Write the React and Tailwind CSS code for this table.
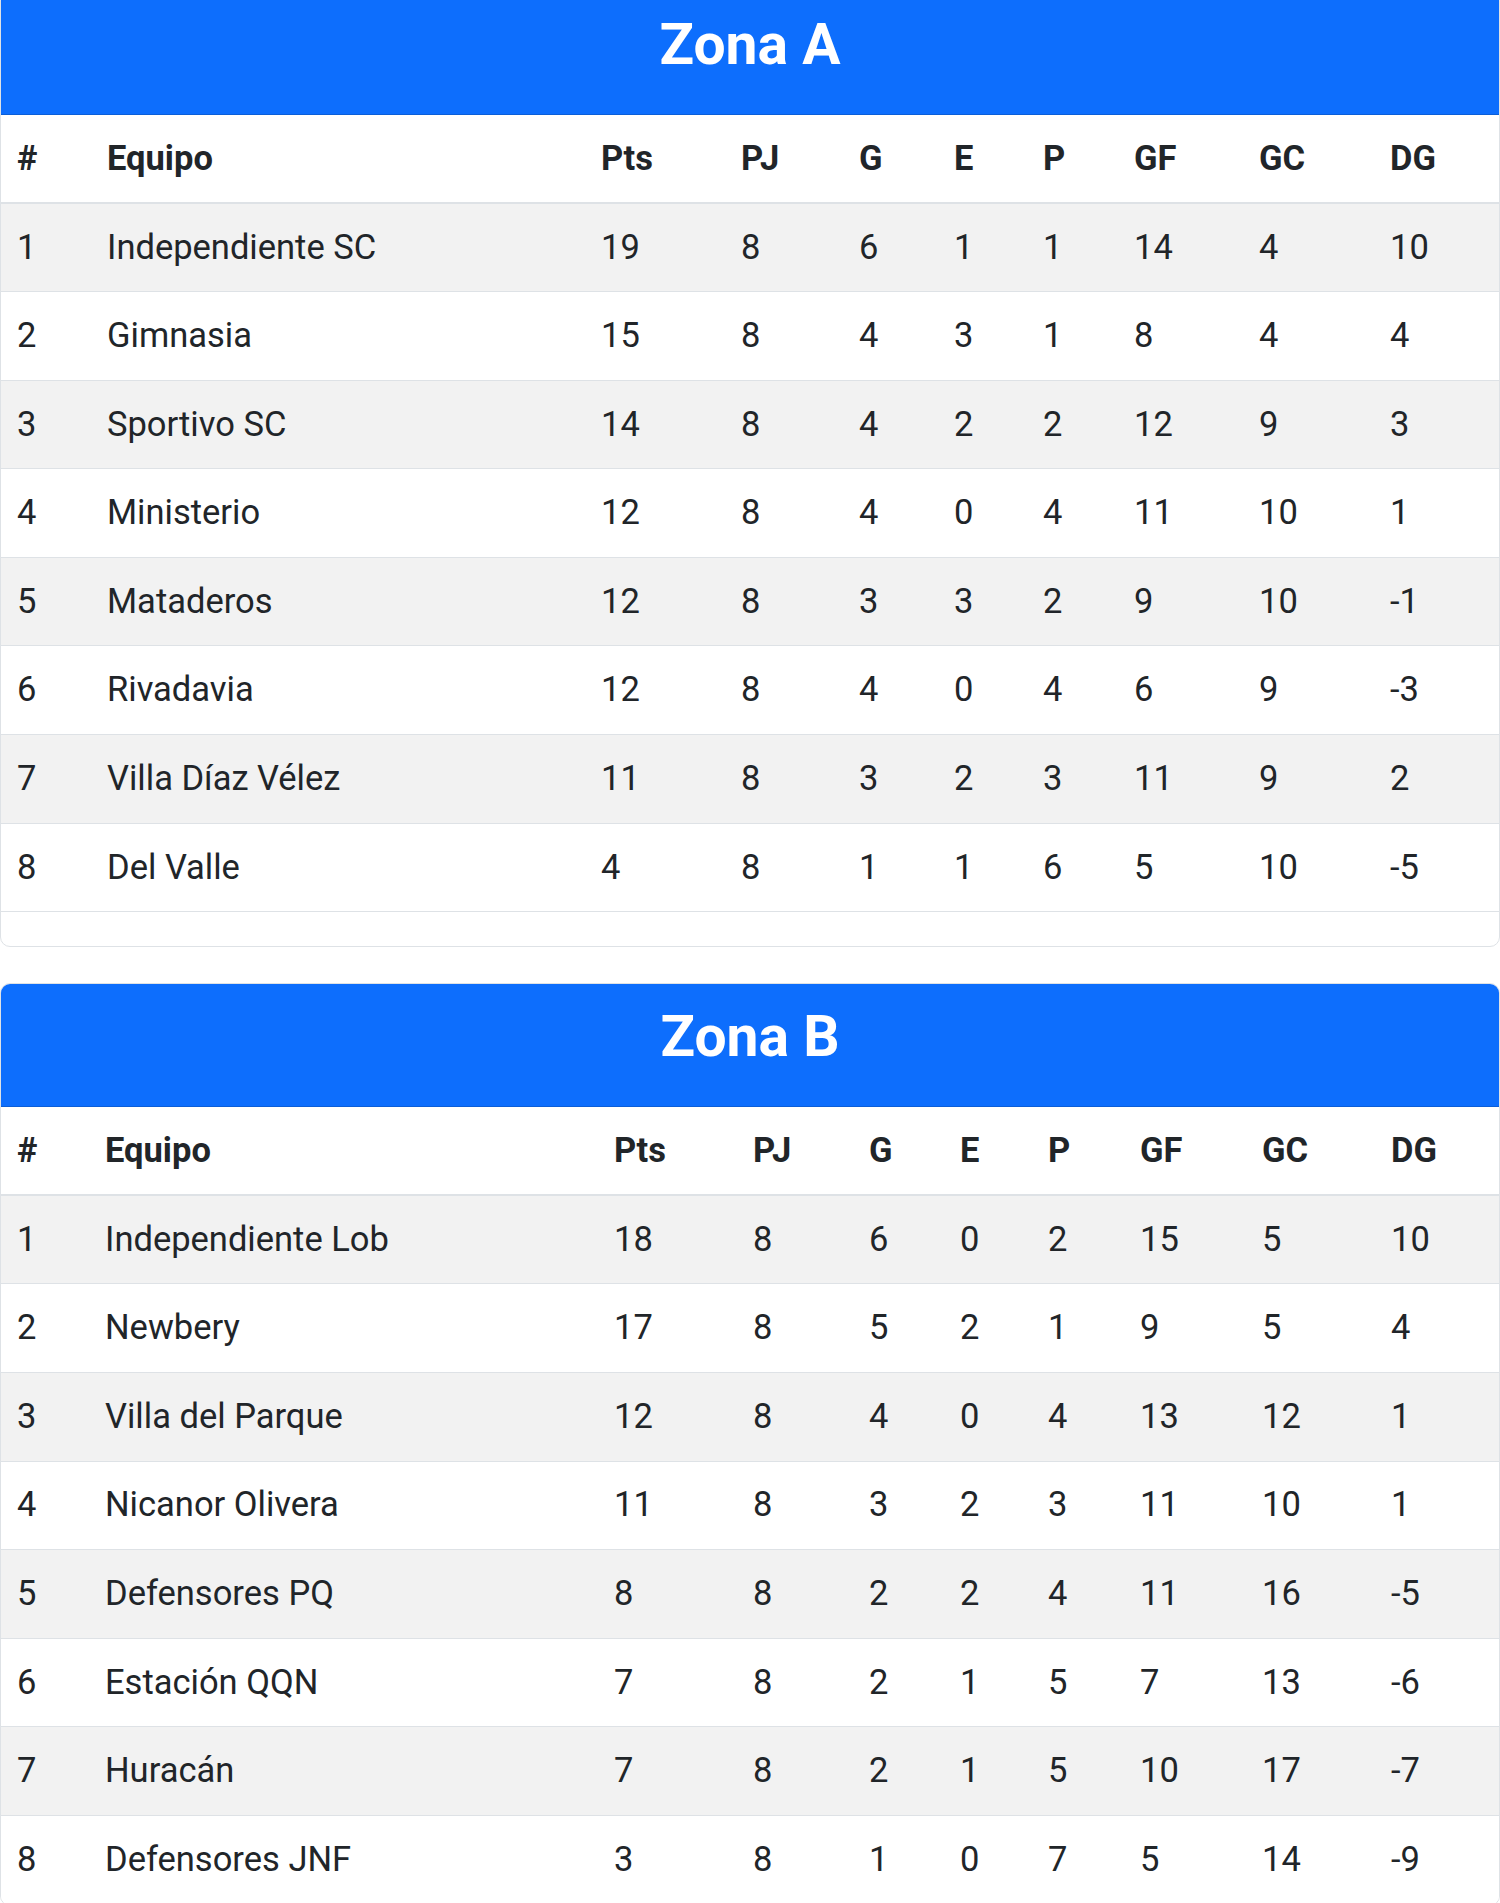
import React from "react";

const columns = ["#", "Equipo", "Pts", "PJ", "G", "E", "P", "GF", "GC", "DG"];

const zonaA = [
  [1, "Independiente SC", 19, 8, 6, 1, 1, 14, 4, 10],
  [2, "Gimnasia", 15, 8, 4, 3, 1, 8, 4, 4],
  [3, "Sportivo SC", 14, 8, 4, 2, 2, 12, 9, 3],
  [4, "Ministerio", 12, 8, 4, 0, 4, 11, 10, 1],
  [5, "Mataderos", 12, 8, 3, 3, 2, 9, 10, -1],
  [6, "Rivadavia", 12, 8, 4, 0, 4, 6, 9, -3],
  [7, "Villa Díaz Vélez", 11, 8, 3, 2, 3, 11, 9, 2],
  [8, "Del Valle", 4, 8, 1, 1, 6, 5, 10, -5],
];

const zonaB = [
  [1, "Independiente Lob", 18, 8, 6, 0, 2, 15, 5, 10],
  [2, "Newbery", 17, 8, 5, 2, 1, 9, 5, 4],
  [3, "Villa del Parque", 12, 8, 4, 0, 4, 13, 12, 1],
  [4, "Nicanor Olivera", 11, 8, 3, 2, 3, 11, 10, 1],
  [5, "Defensores PQ", 8, 8, 2, 2, 4, 11, 16, -5],
  [6, "Estación QQN", 7, 8, 2, 1, 5, 7, 13, -6],
  [7, "Huracán", 7, 8, 2, 1, 5, 10, 17, -7],
  [8, "Defensores JNF", 3, 8, 1, 0, 7, 5, 14, -9],
];

// column widths differ a little between the two tables (auto layout in the original)
const widthsA = [90, 494, 140, 118, 95, 89, 91, 125, 131, 127];
const widthsB = [88, 509, 139, 116, 91, 88, 92, 122, 129, 126];

function ZoneCard({ title, rows, widths, className = "" }) {
  return (
    <section className={`overflow-hidden rounded-[10px] border border-[#dee2e6] bg-white ${className}`}>
      <h2 className="border-b border-[#0b5ed7] bg-[#0d6efd] pt-[19px] pb-[35px] text-center text-[57px] leading-[68px] font-bold text-white">
        {title}
      </h2>
      <table className="w-full table-fixed border-collapse text-left">
        <colgroup>
          {widths.map((w, i) => (
            <col key={i} style={{ width: w }} />
          ))}
        </colgroup>
        <thead>
          <tr className="border-b-2 border-[#dee2e6]">
            {columns.map((c) => (
              <th key={c} className="h-[88px] pl-[16px] align-middle text-[34.5px] font-bold">
                {c}
              </th>
            ))}
          </tr>
        </thead>
        <tbody>
          {rows.map((row, i) => (
            <tr key={row[0]} className={`border-b border-[#dee2e6] ${i % 2 === 0 ? "bg-[#f2f2f2]" : "bg-white"}`}>
              {row.map((cell, j) => (
                <td key={j} className="h-[88.6px] pl-[16px] align-middle text-[34.5px] font-normal whitespace-nowrap">
                  {cell}
                </td>
              ))}
            </tr>
          ))}
        </tbody>
      </table>
    </section>
  );
}

export default function App() {
  return (
    <div className="min-h-screen overflow-hidden bg-white font-['Roboto','Liberation_Sans',sans-serif] text-[#212529]">
      <ZoneCard title="Zona A" rows={zonaA} widths={widthsA} className="-mt-[9px] pb-[34px]" />
      <ZoneCard title="Zona B" rows={zonaB} widths={widthsB} className="mt-[36px]" />
    </div>
  );
}
